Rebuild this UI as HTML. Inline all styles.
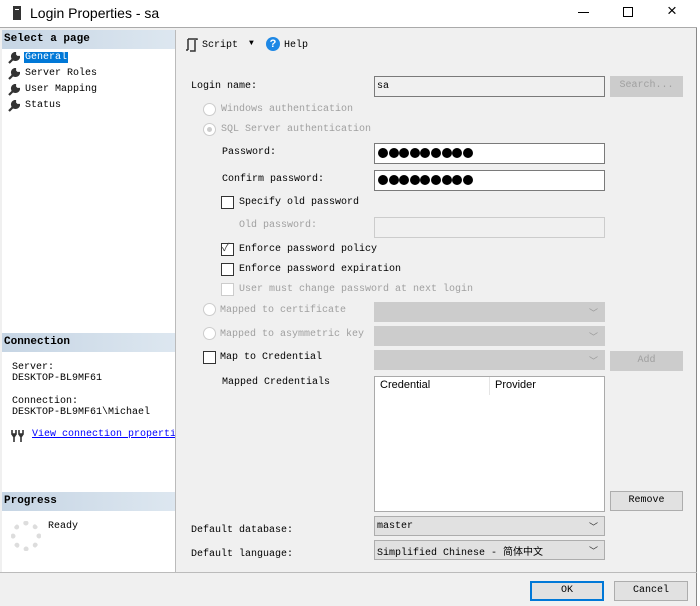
<!DOCTYPE html>
<html><head><style>
*{margin:0;padding:0;box-sizing:border-box}
body{width:700px;height:606px;background:#fff;position:relative;overflow:hidden;font-family:"Liberation Mono","Noto Sans CJK SC",monospace;font-size:10px;color:#000}
.a{position:absolute}
.win{left:0;top:0;width:697px;height:606px;background:#f0f0f0;border-right:1px solid #888}
.title{left:0;top:0;width:697px;height:28px;background:#fff;border-bottom:1px solid #aaa}
.left{left:2px;top:30px;width:174px;height:543px;background:#fff;border-right:1px solid #bbb}
.hdr{left:2px;width:173px;height:19px;background:linear-gradient(90deg,#c6d5e4,#dde7f0);font-weight:bold;font-size:11px;padding:3px 2px;font-family:"Liberation Mono",monospace}
.box{border:1px solid #7a7a7a;background:#fff}
.dis{border:1px solid #ccc;background:#f0f0f0}
.cmb{border:1px solid #ccc;background:#ccc}
.btn{border:1px solid #adadad;background:#e1e1e1;text-align:center;line-height:20px}
.g{color:#a0a0a0}
.rad{width:13px;height:13px;border:1px solid #ccc;border-radius:50%;background:#fff}
.chk{width:13px;height:13px;border:1px solid #333;background:#fff}
.dots{padding:4px 0 0 3px;white-space:nowrap;overflow:hidden}
.dots i{display:inline-block;width:10px;height:10px;border-radius:50%;background:#000;margin-right:0.6px}
.arr{position:absolute;right:6px;top:3px;color:#999;font-size:9px}
.wr{position:absolute;left:8px;width:12px;height:12px}
</style></head><body>
<div class="a win"></div>
<div class="a title"></div>
<div class="a" style="left:13px;top:6px;width:8px;height:14px;background:#333"></div>
<div class="a" style="left:15px;top:9px;width:4px;height:1px;background:#fff"></div>
<div class="a" style="left:30px;top:5px;font-family:'Liberation Sans',sans-serif;font-size:14px">Login Properties - sa</div>
<div class="a" style="left:578px;top:12px;width:11px;height:1px;background:#000"></div>
<div class="a" style="left:623px;top:7px;width:10px;height:10px;border:1px solid #000"></div>
<div class="a" style="left:667px;top:1px;font-family:'Liberation Sans';font-size:17px">×</div>

<div class="a left"></div>
<div class="a hdr" style="top:30px">Select a page</div>
<svg class="wr" style="top:52px" viewBox="0 0 12 12"><path d="M1 11L6 6M7 1a3.5 3.5 0 1 0 4 4L9 5 7 3z" stroke="#333" stroke-width="2.2" fill="#333"/></svg>
<div class="a" style="left:24px;top:52px;background:#0078d7;color:#fff;padding:0 1px">General</div>
<svg class="wr" style="top:68px" viewBox="0 0 12 12"><path d="M1 11L6 6M7 1a3.5 3.5 0 1 0 4 4L9 5 7 3z" stroke="#333" stroke-width="2.2" fill="#333"/></svg><div class="a" style="left:25px;top:68px">Server Roles</div>
<svg class="wr" style="top:84px" viewBox="0 0 12 12"><path d="M1 11L6 6M7 1a3.5 3.5 0 1 0 4 4L9 5 7 3z" stroke="#333" stroke-width="2.2" fill="#333"/></svg><div class="a" style="left:25px;top:84px">User Mapping</div>
<svg class="wr" style="top:100px" viewBox="0 0 12 12"><path d="M1 11L6 6M7 1a3.5 3.5 0 1 0 4 4L9 5 7 3z" stroke="#333" stroke-width="2.2" fill="#333"/></svg><div class="a" style="left:25px;top:100px">Status</div>

<div class="a hdr" style="top:333px">Connection</div>
<div class="a" style="left:12px;top:362px;line-height:11px">Server:<br>DESKTOP-BL9MF61</div>
<div class="a" style="left:12px;top:396px;line-height:11px">Connection:<br>DESKTOP-BL9MF61\Michael</div>
<svg class="a" style="left:11px;top:430px" width="14" height="12" viewBox="0 0 14 12"><path d="M1 0v4h4V0M3 4v8M8 0v4h4V0M10 4v8M1 4l2 3 2-3M8 4l2 3 2-3" stroke="#333" stroke-width="1.6" fill="none"/></svg>
<div class="a" style="left:32px;top:429px;color:#00f;text-decoration:underline;white-space:nowrap;width:143px;overflow:hidden">View connection properties</div>
<div class="a hdr" style="top:492px">Progress</div>
<div class="a" style="left:11px;top:521px;width:30px;height:30px;border:5px dotted #ddd;border-radius:50%"></div>
<div class="a" style="left:48px;top:521px">Ready</div>

<svg class="a" style="left:185px;top:38px" width="13" height="14" viewBox="0 0 13 14"><path d="M3 1h9v1M3 1v11M3 12H1M10 2v11H5" stroke="#333" stroke-width="1.5" fill="none"/></svg>
<div class="a" style="left:202px;top:40px">Script</div>
<div class="a" style="left:249px;top:39px;font-size:8px">▼</div>
<div class="a" style="left:266px;top:37px;width:14px;height:14px;border-radius:50%;background:#1e88e5;color:#fff;font-weight:bold;text-align:center;font-size:11px;line-height:14px;font-family:'Liberation Sans'">?</div>
<div class="a" style="left:284px;top:40px">Help</div>

<div class="a" style="left:191px;top:81px">Login name:</div>
<div class="a box" style="left:374px;top:76px;width:231px;height:21px;background:#f0f0f0;padding:4px 2px">sa</div>
<div class="a btn g" style="left:610px;top:76px;width:73px;height:21px;background:#ccc;border-color:#ccc;line-height:18px">Search...</div>
<div class="a rad" style="left:203px;top:103px"></div><div class="a g" style="left:221px;top:104px">Windows authentication</div>
<div class="a rad" style="left:203px;top:123px"></div><div class="a" style="left:207px;top:127px;width:5px;height:5px;border-radius:50%;background:#ccc"></div><div class="a g" style="left:221px;top:124px">SQL Server authentication</div>
<div class="a" style="left:222px;top:147px">Password:</div>
<div class="a box dots" style="left:374px;top:143px;width:231px;height:21px"><i></i><i></i><i></i><i></i><i></i><i></i><i></i><i></i><i></i></div>
<div class="a" style="left:222px;top:174px">Confirm password:</div>
<div class="a box dots" style="left:374px;top:170px;width:231px;height:21px"><i></i><i></i><i></i><i></i><i></i><i></i><i></i><i></i><i></i></div>
<div class="a chk" style="left:221px;top:196px"></div><div class="a" style="left:239px;top:197px">Specify old password</div>
<div class="a g" style="left:239px;top:220px">Old password:</div>
<div class="a dis" style="left:374px;top:217px;width:231px;height:21px"></div>
<div class="a chk" style="left:221px;top:243px;border-color:#333;font-size:11px;line-height:10px;color:#444">✓</div><div class="a" style="left:239px;top:244px">Enforce password policy</div>
<div class="a chk" style="left:221px;top:263px"></div><div class="a" style="left:239px;top:264px">Enforce password expiration</div>
<div class="a chk" style="left:221px;top:283px;border-color:#ccc"></div><div class="a g" style="left:239px;top:284px">User must change password at next login</div>

<div class="a rad" style="left:203px;top:303px"></div><div class="a g" style="left:220px;top:305px">Mapped to certificate</div>
<div class="a cmb" style="left:374px;top:302px;width:231px;height:20px"><span class="arr">﹀</span></div>
<div class="a rad" style="left:203px;top:327px"></div><div class="a g" style="left:220px;top:329px">Mapped to asymmetric key</div>
<div class="a cmb" style="left:374px;top:326px;width:231px;height:20px"><span class="arr">﹀</span></div>
<div class="a chk" style="left:203px;top:351px"></div><div class="a" style="left:220px;top:352px">Map to Credential</div>
<div class="a cmb" style="left:374px;top:350px;width:231px;height:20px"><span class="arr">﹀</span></div>
<div class="a btn g" style="left:610px;top:351px;width:73px;height:20px;background:#ccc;border-color:#ccc;line-height:18px">Add</div>
<div class="a" style="left:222px;top:377px">Mapped Credentials</div>
<div class="a box" style="left:374px;top:376px;width:231px;height:136px;border-color:#aaa"></div>
<div class="a" style="left:380px;top:379px;font-family:'Liberation Sans';font-size:11px">Credential</div>
<div class="a" style="left:489px;top:377px;width:1px;height:18px;background:#e5e5e5"></div>
<div class="a" style="left:495px;top:379px;font-family:'Liberation Sans';font-size:11px">Provider</div>
<div class="a btn" style="left:610px;top:491px;width:73px;height:20px;line-height:18px">Remove</div>

<div class="a" style="left:191px;top:525px">Default database:</div>
<div class="a box" style="left:374px;top:516px;width:231px;height:20px;background:#e1e1e1;border-color:#adadad;padding:4px 2px">master<span class="arr" style="color:#333">﹀</span></div>
<div class="a" style="left:191px;top:549px">Default language:</div>
<div class="a box" style="left:374px;top:540px;width:231px;height:20px;background:#e1e1e1;border-color:#adadad;padding:2px 2px;white-space:nowrap">Simplified Chinese - 简体中文<span class="arr" style="color:#333">﹀</span></div>

<div class="a" style="left:0;top:572px;width:697px;height:1px;background:#bbb"></div>
<div class="a btn" style="left:530px;top:581px;width:74px;height:20px;border:2px solid #0078d7;line-height:16px">OK</div>
<div class="a btn" style="left:614px;top:581px;width:74px;height:20px;line-height:18px">Cancel</div>
</body></html>
